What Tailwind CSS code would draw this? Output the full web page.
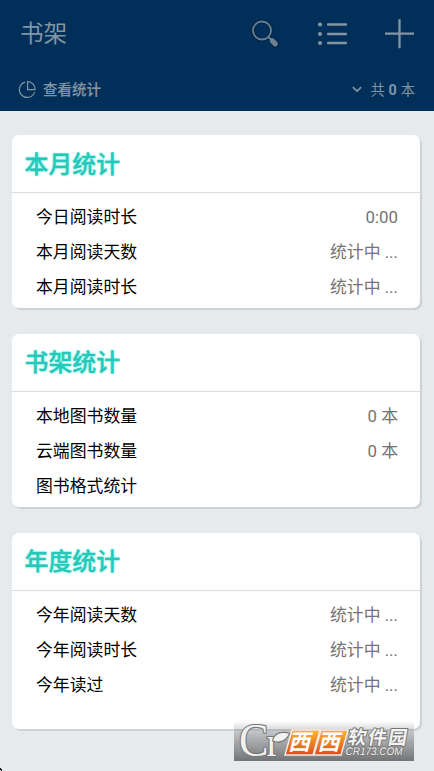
<!DOCTYPE html>
<html lang="zh-CN">
<head>
<meta charset="utf-8">
<title>书架</title>
<script src="https://cdn.jsdelivr.net/npm/@tailwindcss/browser@4"></script>
</head>
<body class="relative w-[434px] h-[771px] overflow-hidden bg-[#e6eaed] font-['Noto_Sans_CJK_SC',sans-serif]">
<header class="h-[111px] bg-[#003059] text-[#8394a3] flex flex-col">
  <div class="h-[68px] flex items-center justify-between pl-5 pr-[20px]">
    <h1 class="text-[23.6px] leading-none pb-[2px]">书架</h1>
    <div class="flex items-center">
      <svg class="w-[32px] h-[32px] mr-[35px]" viewBox="0 0 32 32" fill="none">
        <g stroke="#05213c" stroke-opacity=".65" stroke-linecap="round"><circle cx="12" cy="12.5" r="9" stroke-width="4"/><path d="M18.500 19l2.8 2.8" stroke-width="4"/><path d="M22.3 22.8l3.500 3.8" stroke-width="7.5"/></g>
        <g stroke="#6b7f92" stroke-linecap="round"><circle cx="12" cy="12.5" r="9" stroke-width="1.8"/><path d="M18.500 19l3 3" stroke-width="2"/><path d="M22.3 22.8l3 3" stroke-width="5.2"/></g>
      </svg>
      <svg class="w-[32px] h-[32px] mr-[36px]" viewBox="0 0 32 32" fill="#8394a3">
        <circle cx="3" cy="6.5" r="2.1"/><circle cx="3" cy="16" r="2.1"/><circle cx="3" cy="25" r="2.1"/>
        <rect x="10" y="5.2" width="20" height="2.5" rx=".7"/><rect x="10" y="14.7" width="20" height="2.5" rx=".7"/><rect x="10" y="23.8" width="20" height="2.5" rx=".7"/>
      </svg>
      <svg class="w-[29px] h-[30px]" viewBox="0 0 29 30" stroke="#8394a3" stroke-width="2.3"><path d="M0 14.7h29M14.5 .3v29"/></svg>
    </div>
  </div>
  <div class="h-[43px] flex items-center justify-between pl-[18px] pr-[19px]">
    <div class="flex items-center">
      <svg class="w-[18px] h-[18px] mr-[7px]" viewBox="0 0 18 18" fill="none" stroke="#8394a3" stroke-width="1.2"><path d="M7.2 1.1A7.8 7.8 0 1 0 16.6 11.1M9.6 .7v8h7.5A7.6 7.6 0 0 0 9.6 .7z"/></svg>
      <span class="text-[14.5px] leading-none font-medium [-webkit-text-stroke:0.15px_#8394a3]">查看统计</span>
    </div>
    <div class="flex items-center">
      <svg class="w-[10px] h-[7px] mr-2" viewBox="0 0 10 7" fill="none" stroke="#8394a3" stroke-width="1.7"><path d="M.8 1.2L5 5.2l4.2-4"/></svg>
      <span class="text-[14.3px] leading-none [word-spacing:0.7px]">共 <span class="font-['Roboto'] font-bold">0</span> 本</span>
    </div>
  </div>
</header>
<main class="pt-6 pl-3 pr-[14px] flex flex-col gap-[26px] text-[16.85px]">
  <section class="h-[173px] bg-white rounded-[7px] shadow-[2px_2px_0_#cdd2d5]">
    <h2 class="h-[57px] flex items-center pb-[2px] pl-[12.5px] text-[23.9px] font-medium text-[#25c9b9] [-webkit-text-stroke:0.4px_#25c9b9] [text-shadow:0_0_3px_#8cfff3]">本月统计</h2>
    <div class="h-px w-[410px] bg-[#d9dbdc]"></div>
    <div class="pt-[6px] pl-6 pr-[22px]">
      <div class="h-[35px] flex items-center justify-between"><span class="pb-[1px]">今日阅读时长</span><span class="pt-[2px] text-[#747474] font-['Roboto']">0:00</span></div>
      <div class="h-[35px] flex items-center justify-between"><span class="pb-[2px]">本月阅读天数</span><span class="pt-[2px] text-[#747474] font-['Roboto','Noto_Sans_CJK_SC']">统计中 ...</span></div>
      <div class="h-[35px] flex items-center justify-between"><span class="pb-[2px]">本月阅读时长</span><span class="pt-[2px] text-[#747474] font-['Roboto','Noto_Sans_CJK_SC']">统计中 ...</span></div>
    </div>
  </section>
  <section class="h-[173px] bg-white rounded-[7px] shadow-[2px_2px_0_#cdd2d5]">
    <h2 class="h-[57px] flex items-center pb-[3px] pl-[12.5px] text-[23.9px] font-medium text-[#25c9b9] [-webkit-text-stroke:0.4px_#25c9b9] [text-shadow:0_0_3px_#8cfff3]">书架统计</h2>
    <div class="h-px w-[410px] bg-[#d9dbdc]"></div>
    <div class="pt-[6px] pl-6 pr-[22px]">
      <div class="h-[35px] flex items-center justify-between"><span class="pb-[2px]">本地图书数量</span><span class="pt-[2px] text-[#747474] font-['Roboto','Noto_Sans_CJK_SC']">0 本</span></div>
      <div class="h-[35px] flex items-center justify-between"><span class="pb-[2px]">云端图书数量</span><span class="pt-[2px] text-[#747474] font-['Roboto','Noto_Sans_CJK_SC']">0 本</span></div>
      <div class="h-[35px] flex items-center"><span class="pb-[2px]">图书格式统计</span></div>
    </div>
  </section>
  <section class="h-[196px] bg-white rounded-[7px] shadow-[2px_2px_0_#cdd2d5]">
    <h2 class="h-[57px] flex items-center pb-[3px] pl-[12.5px] text-[23.9px] font-medium text-[#25c9b9] [-webkit-text-stroke:0.4px_#25c9b9] [text-shadow:0_0_3px_#8cfff3]">年度统计</h2>
    <div class="h-px w-[410px] bg-[#d9dbdc]"></div>
    <div class="pt-[6px] pl-6 pr-[22px]">
      <div class="h-[35px] flex items-center justify-between"><span class="pb-[2px]">今年阅读天数</span><span class="pt-[2px] text-[#747474] font-['Roboto','Noto_Sans_CJK_SC']">统计中 ...</span></div>
      <div class="h-[35px] flex items-center justify-between"><span class="pb-[2px]">今年阅读时长</span><span class="pt-[2px] text-[#747474] font-['Roboto','Noto_Sans_CJK_SC']">统计中 ...</span></div>
      <div class="h-[35px] flex items-center justify-between"><span class="pb-[2px]">今年读过</span><span class="pt-[2px] text-[#747474] font-['Roboto','Noto_Sans_CJK_SC']">统计中 ...</span></div>
    </div>
  </section>
</main>
<!-- site badge -->
<svg class="absolute left-[234px] top-[721px] overflow-visible" width="180" height="40" viewBox="0 0 180 40">
  <defs>
    <linearGradient id="shade" x2="0" y2="1"><stop offset="0" stop-color="#777" stop-opacity="0"/><stop offset=".5" stop-color="#858687" stop-opacity=".65"/><stop offset="1" stop-color="#727374"/></linearGradient>
    <linearGradient id="tile" x2="0" y2="1"><stop offset="0" stop-color="#ffb52e"/><stop offset="1" stop-color="#dc4c20"/></linearGradient>
  </defs>
  <rect width="180" height="40" fill="url(#shade)"/>
  <g fill="#f1f1f1" stroke="#777" stroke-width="2.2" paint-order="stroke" stroke-linejoin="round">
    <text x="5" y="35" font-family="Liberation Serif" font-size="46" textLength="41" lengthAdjust="spacingAndGlyphs">C<tspan font-size="42" dx="-2">r</tspan></text>
    <path d="M39 19.500C41 12.500 47 11 55 12.500C52 19 46 22 39 19.500z"/>
  </g>
  <g stroke="#f2eee9" stroke-width="1.4">
    <path d="M58 9h28l-7 25H51z" fill="url(#tile)"/><path d="M87 9h27l-7 25H80z" fill="url(#tile)"/>
  </g>
  <text transform="translate(54 29) skewX(-14)" fill="#fff" font-family="Noto Sans CJK SC" font-weight="bold" font-size="22" textLength="51.5">西西</text>
  <g fill="#f4f4f4" stroke="#777" stroke-width="2" paint-order="stroke" stroke-linejoin="round">
    <text transform="translate(113 22.500) skewX(-10)" font-family="Noto Sans CJK SC" font-size="18.500" font-weight="bold" textLength="59">软件园</text>
    <text transform="translate(111 34) skewX(-10)" font-family="Liberation Sans" font-size="11" textLength="57" lengthAdjust="spacingAndGlyphs">CR173.COM</text>
  </g>
</svg>
<svg class="absolute left-0 bottom-0" width="3" height="3"><path d="M0 0h1v1h1v1H0zM1 2h1v1H1z" fill="#111"/></svg>
</body>
</html>
